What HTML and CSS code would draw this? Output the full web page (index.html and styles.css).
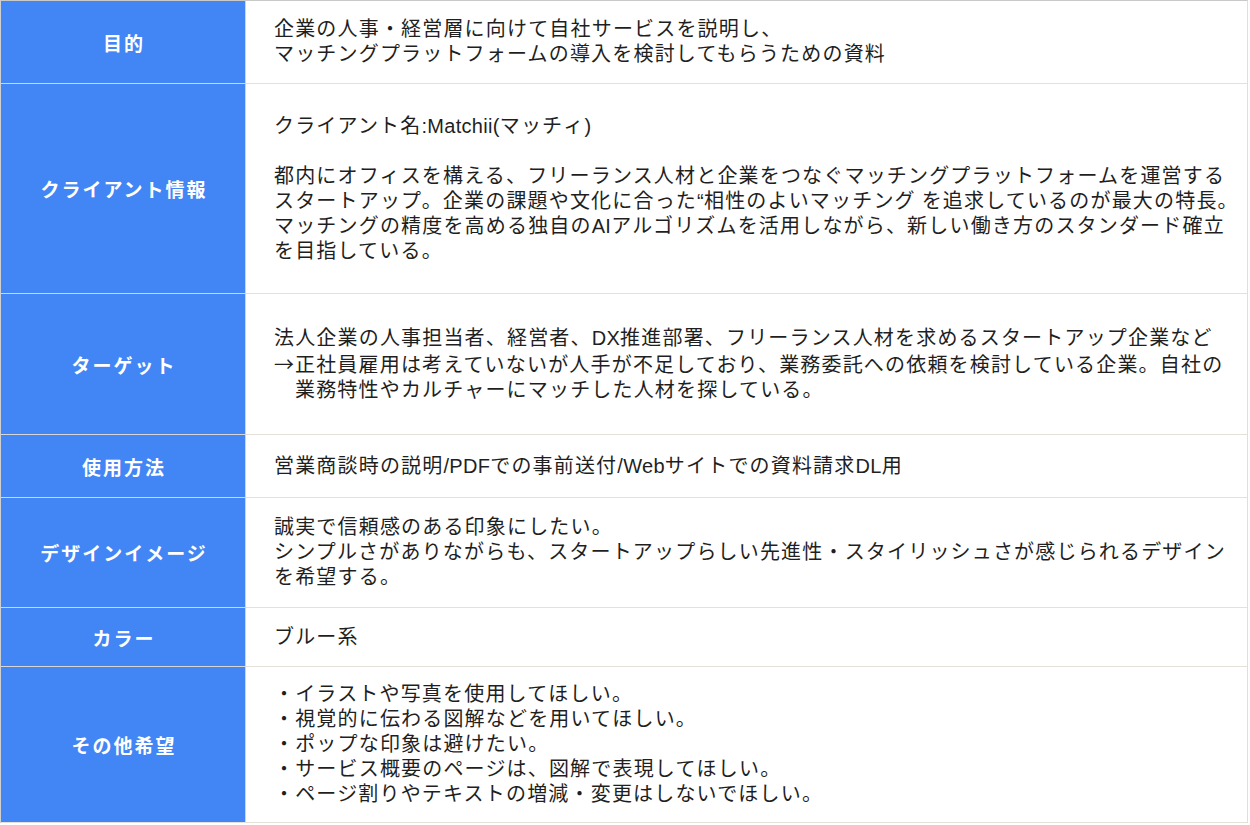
FILE: index.html
```html
<!DOCTYPE html>
<html lang="ja">
<head>
<meta charset="utf-8">
<title>資料概要</title>
<link rel="stylesheet" href="styles.css">
</head>
<body>
<div class="sheet">
  <div class="row r1">
    <div class="label">目的</div>
    <div class="body">
      <p>企業の人事・経営層に向けて自社サービスを説明し、<br>マッチングプラットフォームの導入を検討してもらうための資料</p>
    </div>
  </div>
  <div class="row r2">
    <div class="label">クライアント情報</div>
    <div class="body">
      <p>クライアント名<span class="en">:Matchii(</span>マッチィ<span class="en">)</span></p>
      <p class="blank">&nbsp;</p>
      <p>都内にオフィスを構える、フリーランス人材と企業をつなぐマッチングプラットフォームを運営する<br>スタートアップ。企業の課題や文化に合った<span class="en">“</span>相性のよいマッチング<span class="en"> </span>を追求しているのが最大の特長。<br>マッチングの精度を高める独自の<span class="en">AI</span>アルゴリズムを活用しながら、新しい働き方のスタンダード確立<br>を目指している。</p>
    </div>
  </div>
  <div class="row r3">
    <div class="label">ターゲット</div>
    <div class="body">
      <p>法人企業の人事担当者、経営者、<span class="en">DX</span>推進部署、フリーランス人材を求めるスタートアップ企業など</p>
      <p class="hang"><span class="arrow">→</span>正社員雇用は考えていないが人手が不足しており、業務委託への依頼を検討している企業。自社の<br>業務特性やカルチャーにマッチした人材を探している。</p>
    </div>
  </div>
  <div class="row r4">
    <div class="label">使用方法</div>
    <div class="body">
      <p>営業商談時の説明<span class="en">/PDF</span>での事前送付<span class="en">/Web</span>サイトでの資料請求<span class="en">DL</span>用</p>
    </div>
  </div>
  <div class="row r5">
    <div class="label">デザインイメージ</div>
    <div class="body">
      <p>誠実で信頼感のある印象にしたい。<br>シンプルさがありながらも、スタートアップらしい先進性・スタイリッシュさが感じられるデザイン<br>を希望する。</p>
    </div>
  </div>
  <div class="row r6">
    <div class="label">カラー</div>
    <div class="body">
      <p>ブルー系</p>
    </div>
  </div>
  <div class="row r7">
    <div class="label">その他希望</div>
    <div class="body">
      <p>・イラストや写真を使用してほしい。<br>・視覚的に伝わる図解などを用いてほしい。<br>・ポップな印象は避けたい。<br>・サービス概要のページは、図解で表現してほしい。<br>・ページ割りやテキストの増減・変更はしないでほしい。</p>
    </div>
  </div>
</div>
</body>
</html>
```

FILE: styles.css
```css
* { box-sizing: border-box; }
html, body { margin: 0; padding: 0; background: #ffffff; }
body {
  font-family: "Liberation Sans", "Noto Sans CJK JP", sans-serif;
  color: #1f1f1f;
}
.sheet {
  width: 1248px;
  border-top: 1px solid #c9c9c9;
  border-left: 1px solid #cfcfcf;
  border-right: 1px solid #e2dfd6;
}
.row {
  display: grid;
  grid-template-columns: 245px 1fr;
  border-bottom: 1px solid #e4e1d9;
}
.r1 { height: 83px; }
.r2 { height: 210px; }
.r3 { height: 141px; }
.r4 { height: 63px; }
.r5 { height: 110px; }
.r6 { height: 59px; }
.r7 { height: 156px; }
.label {
  background: #4285f4;
  border-right: 1px solid #d4d4d4;
  color: #ffffff;
  font-weight: bold;
  font-size: 19px;
  letter-spacing: 2px;
  display: flex;
  align-items: center;
  justify-content: center;
  padding-left: 2px;
}
.row:not(:last-child) .label { box-shadow: 0 1px 0 #d6d6d6; }
.body {
  display: flex;
  flex-direction: column;
  justify-content: center;
  padding-left: 28px;
  font-size: 20px;
  line-height: 25px;
  letter-spacing: 1.18px;
}
.body p {
  margin: 0;
  white-space: nowrap;
}
.en { letter-spacing: 0.3px; }
.arrow {
  font-family: "Noto Sans CJK JP", sans-serif;
  letter-spacing: 0;
  display: inline-block;
  width: 21px;
  text-indent: 0;
}
.hang {
  padding-left: 21px;
  text-indent: -21px;
}
```
